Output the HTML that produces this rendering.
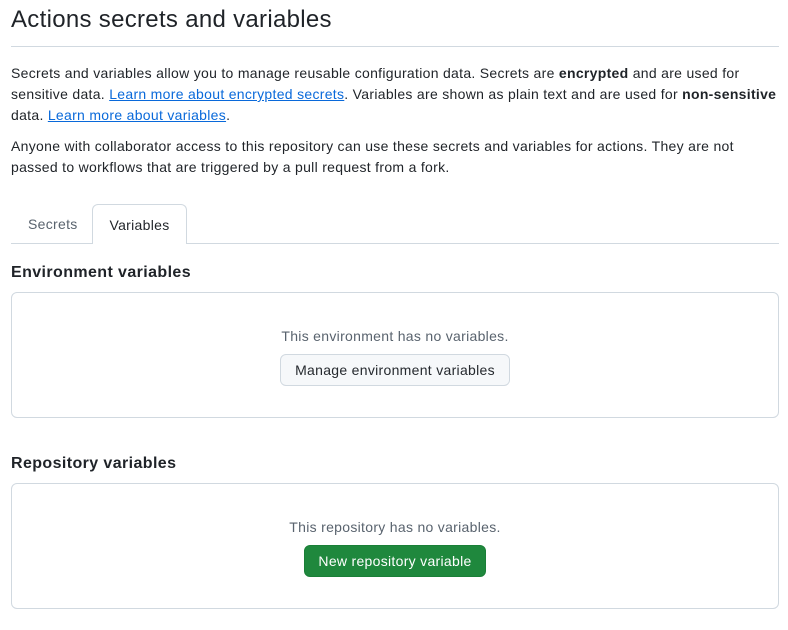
<!DOCTYPE html>
<html><head><meta charset="utf-8"><style>
*{box-sizing:border-box;margin:0;padding:0}
body{width:788px;height:630px;background:#fff;font-family:"Liberation Sans","Noto Sans CJK JP",sans-serif;color:#1f2328;position:relative;overflow:hidden}
.a{position:absolute}
h1{position:absolute;left:11px;top:4px;font-size:24px;font-weight:400;line-height:32px;letter-spacing:0.3px}
.p{font-size:14px;line-height:21px;left:11px;white-space:nowrap;letter-spacing:0.3px}
a{color:#0969da;text-decoration:underline}
.box{position:absolute;left:11px;width:768px;border:1px solid #d1d9e0;border-radius:6px}
.msg{position:absolute;left:0;right:0;text-align:center;font-size:14px;color:#59636e;letter-spacing:0.3px}
.btn{position:absolute;border-radius:6px;font-size:14px;text-align:center;line-height:30px;letter-spacing:0.3px}
h3{position:absolute;left:11px;font-size:16px;font-weight:700;letter-spacing:0.4px}
</style></head><body>
<h1>Actions secrets and variables</h1>
<div class="a" style="left:11px;top:46px;width:768px;height:1px;background:#d1d9e0"></div>
<div class="a p" style="top:63px">Secrets and variables allow you to manage reusable configuration data. Secrets are <b>encrypted</b> and are used for<br>sensitive data. <a>Learn more about encrypted secrets</a>. Variables are shown as plain text and are used for <b>non-sensitive</b><br>data. <a>Learn more about variables</a>.</div>
<div class="a p" style="top:136px">Anyone with collaborator access to this repository can use these secrets and variables for actions. They are not<br>passed to workflows that are triggered by a pull request from a fork.</div>
<div class="a" style="left:11px;top:243px;width:768px;height:1px;background:#d1d9e0"></div>
<div class="a" style="left:28px;top:216px;font-size:14px;color:#59636e;letter-spacing:0.3px">Secrets</div>
<div class="a" style="left:92px;top:204px;width:95px;height:40px;border:1px solid #d1d9e0;border-bottom:none;border-radius:6px 6px 0 0;background:#fff;text-align:center;line-height:40px;font-size:14px;letter-spacing:0.3px">Variables</div>
<h3 style="top:264px">Environment variables</h3>
<div class="box" style="top:292px;height:126px">
<div class="msg" style="top:35px">This environment has no variables.</div>
<div class="btn" style="left:268px;top:61px;width:230px;height:32px;background:#f6f8fa;border:1px solid #d1d9e0;color:#25292e">Manage environment variables</div>
</div>
<h3 style="top:455px">Repository variables</h3>
<div class="box" style="top:483px;height:126px">
<div class="msg" style="top:35px">This repository has no variables.</div>
<div class="btn" style="left:292px;top:61px;width:182px;height:32px;background:#1f883d;border:1px solid #1a7f37;color:#fff">New repository variable</div>
</div>
</body></html>
